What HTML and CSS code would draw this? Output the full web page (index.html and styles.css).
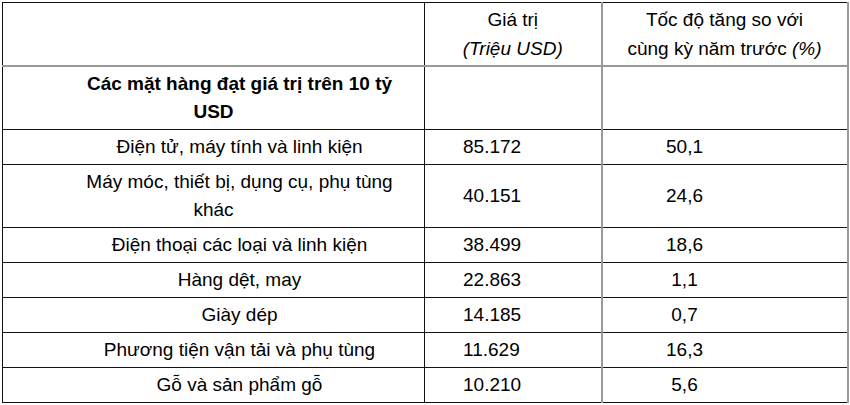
FILE: index.html
```html
<!DOCTYPE html>
<html lang="vi">
<head>
<meta charset="utf-8">
<title>Các mặt hàng đạt giá trị trên 10 tỷ USD</title>
<link rel="stylesheet" href="styles.css">
</head>
<body>
<table class="tbl">
  <colgroup>
    <col class="c1">
    <col class="c2">
    <col class="c3">
  </colgroup>
  <tr class="head">
    <td class="name"></td>
    <td class="hval">Giá trị<br><i>(Triệu USD)</i></td>
    <td class="hpct">Tốc độ tăng so với<br>cùng kỳ năm trước <i>(%)</i></td>
  </tr>
  <tr class="group">
    <td class="name"><b>Các mặt hàng đạt giá trị trên 10 tỷ USD</b></td>
    <td class="val"></td>
    <td class="pct"></td>
  </tr>
  <tr>
    <td class="name">Điện tử, máy tính và linh kiện</td>
    <td class="val">85.172</td>
    <td class="pct">50,1</td>
  </tr>
  <tr>
    <td class="name">Máy móc, thiết bị, dụng cụ, phụ tùng khác</td>
    <td class="val">40.151</td>
    <td class="pct">24,6</td>
  </tr>
  <tr>
    <td class="name">Điện thoại các loại và linh kiện</td>
    <td class="val">38.499</td>
    <td class="pct">18,6</td>
  </tr>
  <tr>
    <td class="name">Hàng dệt, may</td>
    <td class="val">22.863</td>
    <td class="pct">1,1</td>
  </tr>
  <tr>
    <td class="name">Giày dép</td>
    <td class="val">14.185</td>
    <td class="pct">0,7</td>
  </tr>
  <tr>
    <td class="name">Phương tiện vận tải và phụ tùng</td>
    <td class="val">11.629</td>
    <td class="pct">16,3</td>
  </tr>
  <tr>
    <td class="name">Gỗ và sản phẩm gỗ</td>
    <td class="val">10.210</td>
    <td class="pct">5,6</td>
  </tr>
</table>
</body>
</html>
```

FILE: styles.css
```css
html, body {
  margin: 0;
  padding: 0;
  background: #ffffff;
}

body {
  font-family: "Liberation Sans", Arial, sans-serif;
  font-size: 19px;
  color: #000000;
}

.tbl {
  margin: 2px 0 0 2px;
  width: 845px;
  border-collapse: collapse;
  table-layout: fixed;
  border-top: 1px solid #111111;
  border-left: 1px solid #111111;
  border-right: 2px solid #9a9a9a;
  border-bottom: 1px solid #111111;
}

.c1 { width: 422px; }
.c2 { width: 177px; }
.c3 { width: 246px; }

.tbl td {
  border: 1px solid #111111;
  padding: 3px 0;
  line-height: 28px;
  height: 28px;
  vertical-align: middle;
}

.tbl td.pct,
.tbl td.hpct {
  border-left: 2px solid #9a9a9a;
}

.head td {
  line-height: 29px;
  padding-top: 2px;
  padding-bottom: 2px;
  border-bottom: 2px solid #9a9a9a;
}

.name {
  text-align: center;
  text-indent: 52px;
  padding-left: 18px !important;
  padding-right: 18px !important;
}

.val {
  text-align: left;
  padding-left: 38px !important;
}

.pct {
  text-align: center;
  padding-right: 80px !important;
}

.hval,
.hpct {
  text-align: center;
}
```
